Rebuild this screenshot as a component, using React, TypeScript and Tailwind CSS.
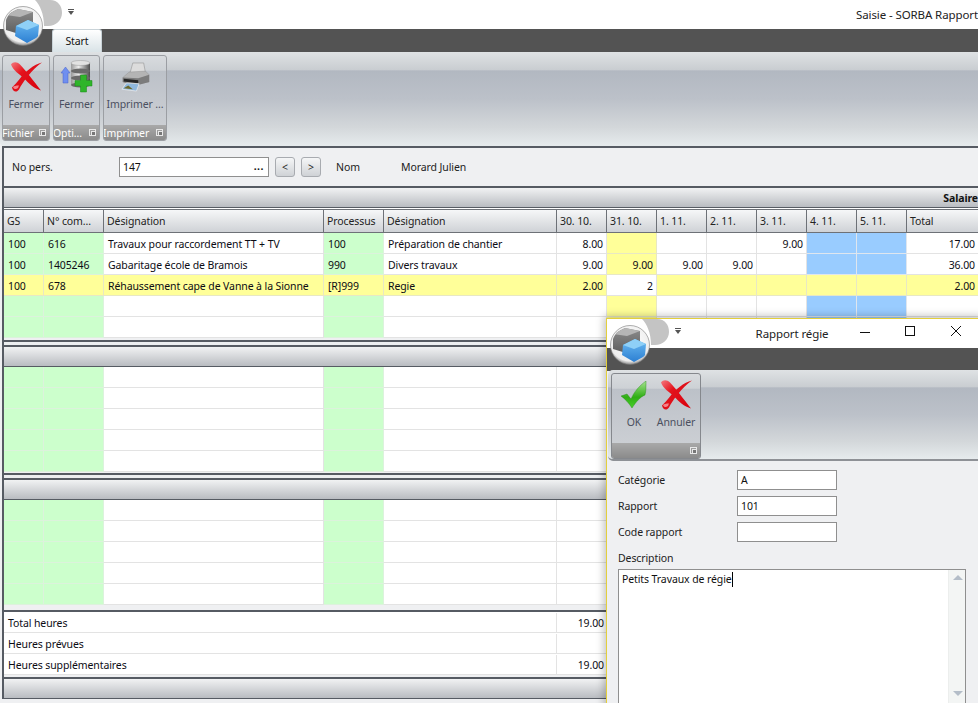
import { useId } from 'react'

const gridCols = 'grid grid-cols-[40px_60px_220px_60px_173px_50px_50px_50px_50px_50px_50px_50px_72px]'
const ribbonBg = 'bg-[linear-gradient(#dfe2e4_0%,#c9cdd1_19%,#b2b8c1_20%,#bcc1c9_50%,#d3d7da_80%,#e6ebed_100%)]'
const groupBg = 'bg-[linear-gradient(#d8dbde_0%,#cdd1d5_17%,#bcc1c8_18%,#c4c8ce_50%,#cfd2d6_100%)]'
const barBg = 'bg-[linear-gradient(#f1f2f3,#b9bcc1)]'

const G = 'bg-[#ccffcc] border-[#dcf2dc]'
const Y = 'bg-[#ffff99] border-[#e8e8c4]'
const B = 'bg-[#99ccff] border-[#dfe6ee]'
const W = 'bg-white border-[#e3e3e3]'

const headers = ['GS', 'N° com...', 'Désignation', 'Processus', 'Désignation', '30. 10.', '31. 10.', '1. 11.', '2. 11.', '3. 11.', '4. 11.', '5. 11.', 'Total']

type Cell = { t?: string; bg: string; right?: boolean }

const mkRow = (vals: string[], bgs: string[]): Cell[] => vals.map((t, i) => ({ t, bg: bgs[i], right: i >= 5 }))

const dayBgs = [W, Y, W, W, W, B, B, W]
const none = ['', '', '', '', '', '', '', '', '', '', '', '', '']
const rows: Cell[][] = [
  mkRow(['100', '616', 'Travaux pour raccordement TT + TV', '100', 'Préparation de chantier', '8.00', '', '', '', '9.00', '', '', '17.00'], [G, G, W, G, W, ...dayBgs]),
  mkRow(['100', '1405246', 'Gabaritage école de Bramois', '990', 'Divers travaux', '9.00', '9.00', '9.00', '9.00', '', '', '', '36.00'], [G, G, W, G, W, ...dayBgs]),
  mkRow(['100', '678', 'Réhaussement cape de Vanne à la Sionne', '[R]999', 'Regie', '2.00', '2', '', '', '', '', '', '2.00'], [Y, Y, Y, Y, Y, Y, W, Y, Y, Y, Y, Y, Y]),
  mkRow(none, [G, G, W, G, W, ...dayBgs]),
  mkRow(none, [G, G, W, G, W, ...dayBgs]),
]
const blank = mkRow(none, [G, G, W, G, W, W, W, W, W, W, W, W, W])

function GridRow({ cells }: { cells: Cell[] }) {
  return (
    <div className={`${gridCols} h-[21px]`}>
      {cells.map((c, i) => (
        <div
          key={i}
          className={`${c.bg} ${c.right ? 'justify-end pr-[3px]' : 'pl-[4px]'} pt-[1px] flex items-center border-r border-b text-[#0c0c14] whitespace-nowrap overflow-hidden`}
        >
          {c.t}
        </div>
      ))}
    </div>
  )
}

function SectionBar({ label }: { label?: string }) {
  return (
    <div className={`${barBg} h-[22px] border-t-2 border-b border-[#565b63] flex items-center justify-end font-bold text-[#111]`}>
      {label}
    </div>
  )
}

// the two-line band that separates the grids
function SectionBand({ gap }: { gap: string }) {
  return (
    <div className={gap}>
      <div className="h-[5px] border-t-2 border-[#565b63] bg-[#eceef0]" />
      <SectionBar />
    </div>
  )
}

function Orb() {
  const id = useId()
  return (
    <svg viewBox="0 0 44 44" className="w-[44px] h-[44px]">
      <defs>
        <radialGradient id={id + 'o'} cx="50%" cy="40%" r="60%">
          <stop offset="0" stopColor="#ffffff" />
          <stop offset="0.85" stopColor="#eeeeee" />
          <stop offset="1" stopColor="#8a8a8a" />
        </radialGradient>
        <linearGradient id={id + 'g'} x1="0" y1="0" x2="0" y2="1">
          <stop offset="0" stopColor="#8c8c8c" />
          <stop offset="1" stopColor="#5e5e5e" />
        </linearGradient>
        <linearGradient id={id + 'b'} x1="0" y1="0" x2="0" y2="1">
          <stop offset="0" stopColor="#6dbcf3" />
          <stop offset="1" stopColor="#2c7fd2" />
        </linearGradient>
        <clipPath id={id + 'c'}><circle cx="22" cy="22" r="18" /></clipPath>
      </defs>
      <circle cx="22" cy="22" r="19.5" fill={`url(#${id}o)`} stroke="#7a7a7a" strokeWidth="0.6" />
      <g clipPath={`url(#${id}c)`}>
        <path d="M5 11 L17 5 L32 8 L32 24 L18 30 L5 26Z" fill={`url(#${id}g)`} />
        <path d="M5 11 L17 5 L32 8 L19 13Z" fill="#b5b5b5" />
        <path d="M15 22 L27 16 L38 21 L37 33 L26 39 L14 32Z" fill={`url(#${id}b)`} />
        <path d="M15 22 L27 16 L38 21 L26 26Z" fill="#8fd0f7" />
      </g>
    </svg>
  )
}

function QuickBar() {
  return (
    <>
      <svg viewBox="0 0 66 27" className="absolute left-0 top-0 w-[66px] h-[27px]">
        <path d="M35 0 H50 C58 0 62 6 62 13 C62 20 56 26 48 26 H44 C44 14 40 5 35 0Z" fill="#c4c4c4" />
      </svg>
      <div className="absolute left-[68px] top-[9px] flex flex-col items-center gap-[1px]">
        <div className="w-[6px] h-[1px] bg-[#555]" />
        <div className="w-0 h-0 border-x-[3px] border-x-transparent border-t-[4px] border-t-[#555]" />
      </div>
    </>
  )
}

function RedX({ size = 32 }: { size?: number }) {
  const id = useId()
  return (
    <svg viewBox="0 0 32 31" style={{ width: size, height: size }}>
      <defs>
        <linearGradient id={id} x1="0" y1="0" x2="1" y2="1">
          <stop offset="0" stopColor="#f47a80" />
          <stop offset="0.35" stopColor="#e5131c" />
          <stop offset="1" stopColor="#d8000c" />
        </linearGradient>
      </defs>
      <path d="M1 3 C3 0 7 0 10 3 C15 8 24 20 31 29 C24 27 19 22 14 17 C9 12 3 9 1 3Z" fill={`url(#${id})`} />
      <path d="M32 1 C24 3 15 10 10 17 C7 21 4 24 2 26 C3 31 7 31 9 28 C13 20 22 8 32 1Z" fill="#e0101a" />
      <path d="M3 25.5 C4 28 6 28 8 26.5 L9 24 C6 24 4 24.5 3 25.5Z" fill="#f5838a" />
    </svg>
  )
}

function DbIcon() {
  const id = useId()
  const disc = (y: number) => (
    <g key={y}>
      <rect x="11" y={y} width="19" height="8" fill={`url(#${id})`} />
      <ellipse cx="20.5" cy={y + 8} rx="9.5" ry="2.5" fill="#6a6a6a" />
      <ellipse cx="20.5" cy={y} rx="9.5" ry="2.5" fill="#e2e2e2" stroke="#888" strokeWidth="0.4" />
    </g>
  )
  return (
    <svg viewBox="0 0 34 33" className="w-[34px] h-[33px]">
      <defs>
        <linearGradient id={id} x1="0" y1="0" x2="1" y2="0">
          <stop offset="0" stopColor="#9a9a9a" />
          <stop offset="0.4" stopColor="#ececec" />
          <stop offset="1" stopColor="#4c4c4c" />
        </linearGradient>
      </defs>
      {[17, 10, 3].map(disc)}
      <path d="M1 13 L5.5 7 L10 13 L8 13 L8 23 L3 23 L3 13Z" fill="#6f8ff0" stroke="#4a63c8" strokeWidth="0.5" />
      <path d="M20.5 15 H26.5 V20.5 H32 V26 H26.5 V32 H20.5 V26 H15 V20.5 H20.5Z" fill="#2fb52a" stroke="#188a18" strokeWidth="0.5" />
    </svg>
  )
}

function PrinterIcon() {
  return (
    <svg viewBox="0 0 32 33" className="w-[29px] h-[30px]">
      <path d="M13 1 L25 1 L27 12 L10 12Z" fill="#dcdcdc" stroke="#8f8f8f" strokeWidth="0.6" />
      <path d="M2 17 L9 11 L27 10 L31 14 L31 22 L12 25 L2 22Z" fill="#b4b4b4" stroke="#8a8a8a" strokeWidth="0.4" />
      <path d="M2 17 L19 18 L31 14 L31 22 L17 26 L2 22Z" fill="#7c7c7c" />
      <path d="M3 18.5 L19 20 L19 23.5 L3 21.5Z" fill="#262626" />
      <path d="M6 23 L20 24 L17 32 L1 30Z" fill="#8fb7dc" stroke="#ededed" strokeWidth="0.8" />
      <path d="M3 29 L8 26 L13 30Z" fill="#6c6a2c" />
    </svg>
  )
}

function CheckIcon() {
  const id = useId()
  return (
    <svg viewBox="0 0 26 27" className="w-[26px] h-[27px]">
      <defs>
        <linearGradient id={id} x1="0" y1="0" x2="0" y2="1">
          <stop offset="0" stopColor="#a6e28f" />
          <stop offset="0.6" stopColor="#2fae14" />
          <stop offset="1" stopColor="#49d02a" />
        </linearGradient>
      </defs>
      <path d="M0 15 L6 13 L10 18 C13 11 18 5 25 0 C25 6 25 10 24 14 C19 16 15 21 11 27 C8 22 4 18 0 15Z" fill={`url(#${id})`} stroke="#1f8a10" strokeWidth="0.4" />
    </svg>
  )
}

function DialogLauncher() {
  return (
    <div className="relative w-[7px] h-[7px] border border-[#e8e8e8]">
      <div className="absolute right-[-1px] bottom-[-1px] w-[5px] h-[5px] border border-[#e8e8e8] bg-[#777]" />
    </div>
  )
}

function RibbonGroup({ width, caption, children }: { width: string; caption?: string; children: React.ReactNode }) {
  return (
    <div className={`${width} ${groupBg} h-[86px] flex flex-col rounded-[3px] border border-[#9b9ea3] overflow-hidden`}>
      <div className="flex-1 flex justify-center">{children}</div>
      <div className="h-[15px] shrink-0 flex items-center justify-between pr-[3px] bg-[linear-gradient(#a9a9a9,#8b8b8b)] text-white whitespace-nowrap">
        <span className="-ml-[1px]">{caption}</span>
        <DialogLauncher />
      </div>
    </div>
  )
}

function RibbonButton({ icon, label, className }: { icon: React.ReactNode; label: string; className?: string }) {
  return (
    <div className={`flex flex-col items-center text-[#4b5060] whitespace-nowrap ${className ?? ''}`}>
      <div className="h-[33px] mt-[4px] flex items-center justify-center">{icon}</div>
      <div className="mt-[4px]">{label}</div>
    </div>
  )
}

function FormField({ label, value }: { label: string; value: string }) {
  return (
    <div className="flex items-center h-[20px] mb-[6px]">
      <div className="w-[119px] text-[#222]">{label}</div>
      <div className="w-[100px] h-[20px] bg-white border border-[#8f8f8f] pl-[3px] flex items-center text-[#111]">{value}</div>
    </div>
  )
}

function RapportDialog() {
  return (
    <div className="absolute left-[606px] top-[318px] w-[380px] h-[400px] bg-[#eff0f2] border-l border-t border-[#e3cf3c] shadow-[-2px_-2px_8px_rgba(0,0,0,0.25)] flex flex-col">
      <div className="relative h-[29px] bg-white shrink-0 flex items-center">
        <QuickBar />
        <div className="absolute left-[1px] top-[4px] z-10"><Orb /></div>
        <div className="absolute left-[140px] w-[90px] text-center text-[11.5px] whitespace-nowrap text-[#222]">Rapport régie</div>
        <svg viewBox="0 0 120 14" className="absolute left-[252px] top-[6px] w-[120px] h-[14px]">
          <path d="M1 7.5 H11" stroke="#111" fill="none" />
          <rect x="46.5" y="1.5" width="9" height="9" stroke="#111" fill="none" />
          <path d="M92 1 L102 11 M102 1 L92 11" stroke="#111" fill="none" />
        </svg>
      </div>
      <div className="h-[23px] bg-[#535353] shrink-0" />
      <div className={`${ribbonBg} h-[91px] shrink-0 -mt-[1px] ml-[1px] rounded-[5px] border-b-2 border-[#8e9196] pl-[3px] pt-[3px]`}>
        <div className={`${groupBg} w-[90px] h-[86px] flex flex-col rounded-[3px] border border-[#85888d] overflow-hidden`}>
          <div className="flex-1 flex pl-[9px] gap-[11px]">
            <RibbonButton icon={<CheckIcon />} label="OK" className="w-[26px]" />
            <RibbonButton icon={<RedX size={32} />} label="Annuler" className="w-[36px]" />
          </div>
          <div className="h-[15px] shrink-0 flex items-center justify-end pr-[3px] bg-[linear-gradient(#a9a9a9,#8b8b8b)]">
            <DialogLauncher />
          </div>
        </div>
      </div>
      <div className="pl-[11px] pt-[9px]">
        <FormField label="Catégorie" value="A" />
        <FormField label="Rapport" value="101" />
        <FormField label="Code rapport" value="" />
        <div className="h-[20px] mt-[6px] flex items-center text-[#222]">Description</div>
        <div className="relative w-[348px] h-[160px] mt-[1px] bg-white border border-[#8f8f8f] pl-[3px] pt-[2px] text-[#111] flex">
          <span className="leading-[14px] h-[15px] border-r border-black">Petits Travaux de régie</span>
          <div className="absolute right-0 top-0 bottom-0 w-[17px] bg-[#f3f5f4] border-l border-[#eceeed]">
            <div className="absolute left-[4px] top-[5px] w-0 h-0 border-x-[5px] border-x-transparent border-b-[5px] border-b-[#b4bdc8]" />
            <div className="absolute left-[4px] top-[121px] w-0 h-0 border-x-[5px] border-x-transparent border-t-[5px] border-t-[#b4bdc8]" />
          </div>
        </div>
      </div>
    </div>
  )
}

export default function App() {
  return (
    <div className="relative w-[978px] h-[703px] overflow-hidden bg-[#eff0f2] text-[10.5px] tracking-[-0.1px] leading-[14px] font-['Noto_Sans','DejaVu_Sans',sans-serif]">
      {/* title bar */}
      <div className="relative h-[29px] bg-white flex items-center justify-end">
        <QuickBar />
        <div className="text-[11.5px] text-[#222] whitespace-nowrap">Saisie - SORBA Rapport</div>
      </div>
      <div className="absolute left-[1px] top-[4px] z-10"><Orb /></div>

      <div className="h-[23px] bg-[#535353] pl-[52px] flex items-end">
        <div className="w-[50px] h-[23px] rounded-t-[3px] border border-b-0 border-[#c9d3d8] bg-[linear-gradient(#ffffff,#d9e3e7)] flex items-center justify-center text-[#111]">Start</div>
      </div>

      {/* ribbon */}
      <div className={`${ribbonBg} h-[94px] pl-[2px] pt-[3px] flex gap-[3px] rounded-b-[4px]`}>
        <RibbonGroup width="w-[48px]" caption="Fichier">
          <RibbonButton icon={<RedX />} label="Fermer" />
        </RibbonGroup>
        <RibbonGroup width="w-[47px]" caption="Opti...">
          <RibbonButton icon={<DbIcon />} label="Fermer" />
        </RibbonGroup>
        <RibbonGroup width="w-[64px]" caption="Imprimer">
          <RibbonButton icon={<PrinterIcon />} label="Imprimer ..." />
        </RibbonGroup>
      </div>

      {/* content */}
      <div className="ml-[2px] border-l-2 border-t-2 border-[#565b63] w-[1000px]">
        <div className="h-[38px] flex items-center text-[#222]">
          <div className="w-[115px] pl-[8px]">No pers.</div>
          <div className="w-[150px] h-[20px] bg-white border border-[#8f8f8f] pl-[3px] pr-[4px] flex items-center justify-between text-[#111]">
            <span>147</span>
            <span className="font-bold tracking-[0.5px] -mt-[3px]">...</span>
          </div>
          <button className="ml-[6px] w-[20px] h-[20px] rounded-[3px] border border-[#a8abb0] bg-[linear-gradient(#f5f6f7,#cfd2d6)] text-[#222]">&lt;</button>
          <button className="ml-[6px] w-[20px] h-[20px] rounded-[3px] border border-[#a8abb0] bg-[linear-gradient(#f5f6f7,#cfd2d6)] text-[#222]">&gt;</button>
          <div className="ml-[15px] w-[65px]">Nom</div>
          <div>Morard Julien</div>
        </div>

        <div className="w-[974px]"><SectionBar label="Salaire" /></div>
        <div className="pt-[1px] bg-white">
          <div className={`${gridCols} h-[24px]`}>
            {headers.map((h, i) => (
              <div key={i} className="bg-[linear-gradient(#f6f7f8,#cfd2d6)] border-r border-y border-[#6d7177] pl-[3px] flex items-center text-[#222] whitespace-nowrap overflow-hidden">
                {h}
              </div>
            ))}
          </div>
        </div>
        {rows.map((r, i) => <GridRow key={i} cells={r} />)}

        <SectionBand gap="mt-[2px]" />
        <div>{[0, 1, 2, 3, 4].map(i => <GridRow key={i} cells={blank} />)}</div>

        <SectionBand gap="mt-[1px]" />
        <div>{[0, 1, 2, 3, 4].map(i => <GridRow key={i} cells={blank} />)}</div>

        <div className="mt-[5px] border-t-2 border-[#565b63]">
          {[['Total heures', '19.00'], ['Heures prévues', ''], ['Heures supplémentaires', '19.00']].map(([l, v]) => (
            <div key={l} className="h-[21px] pt-[1px] bg-white border-b border-[#e3e3e3] flex items-center text-[#0c0c14]">
              <div className="w-[553px] h-full pl-[4px] flex items-center border-r border-[#e3e3e3]">{l}</div>
              <div className="w-[50px] pr-[3px] text-right">{v}</div>
            </div>
          ))}
        </div>
        <div className="mt-[2px]"><SectionBar /></div>
      </div>

      <RapportDialog />
    </div>
  )
}
